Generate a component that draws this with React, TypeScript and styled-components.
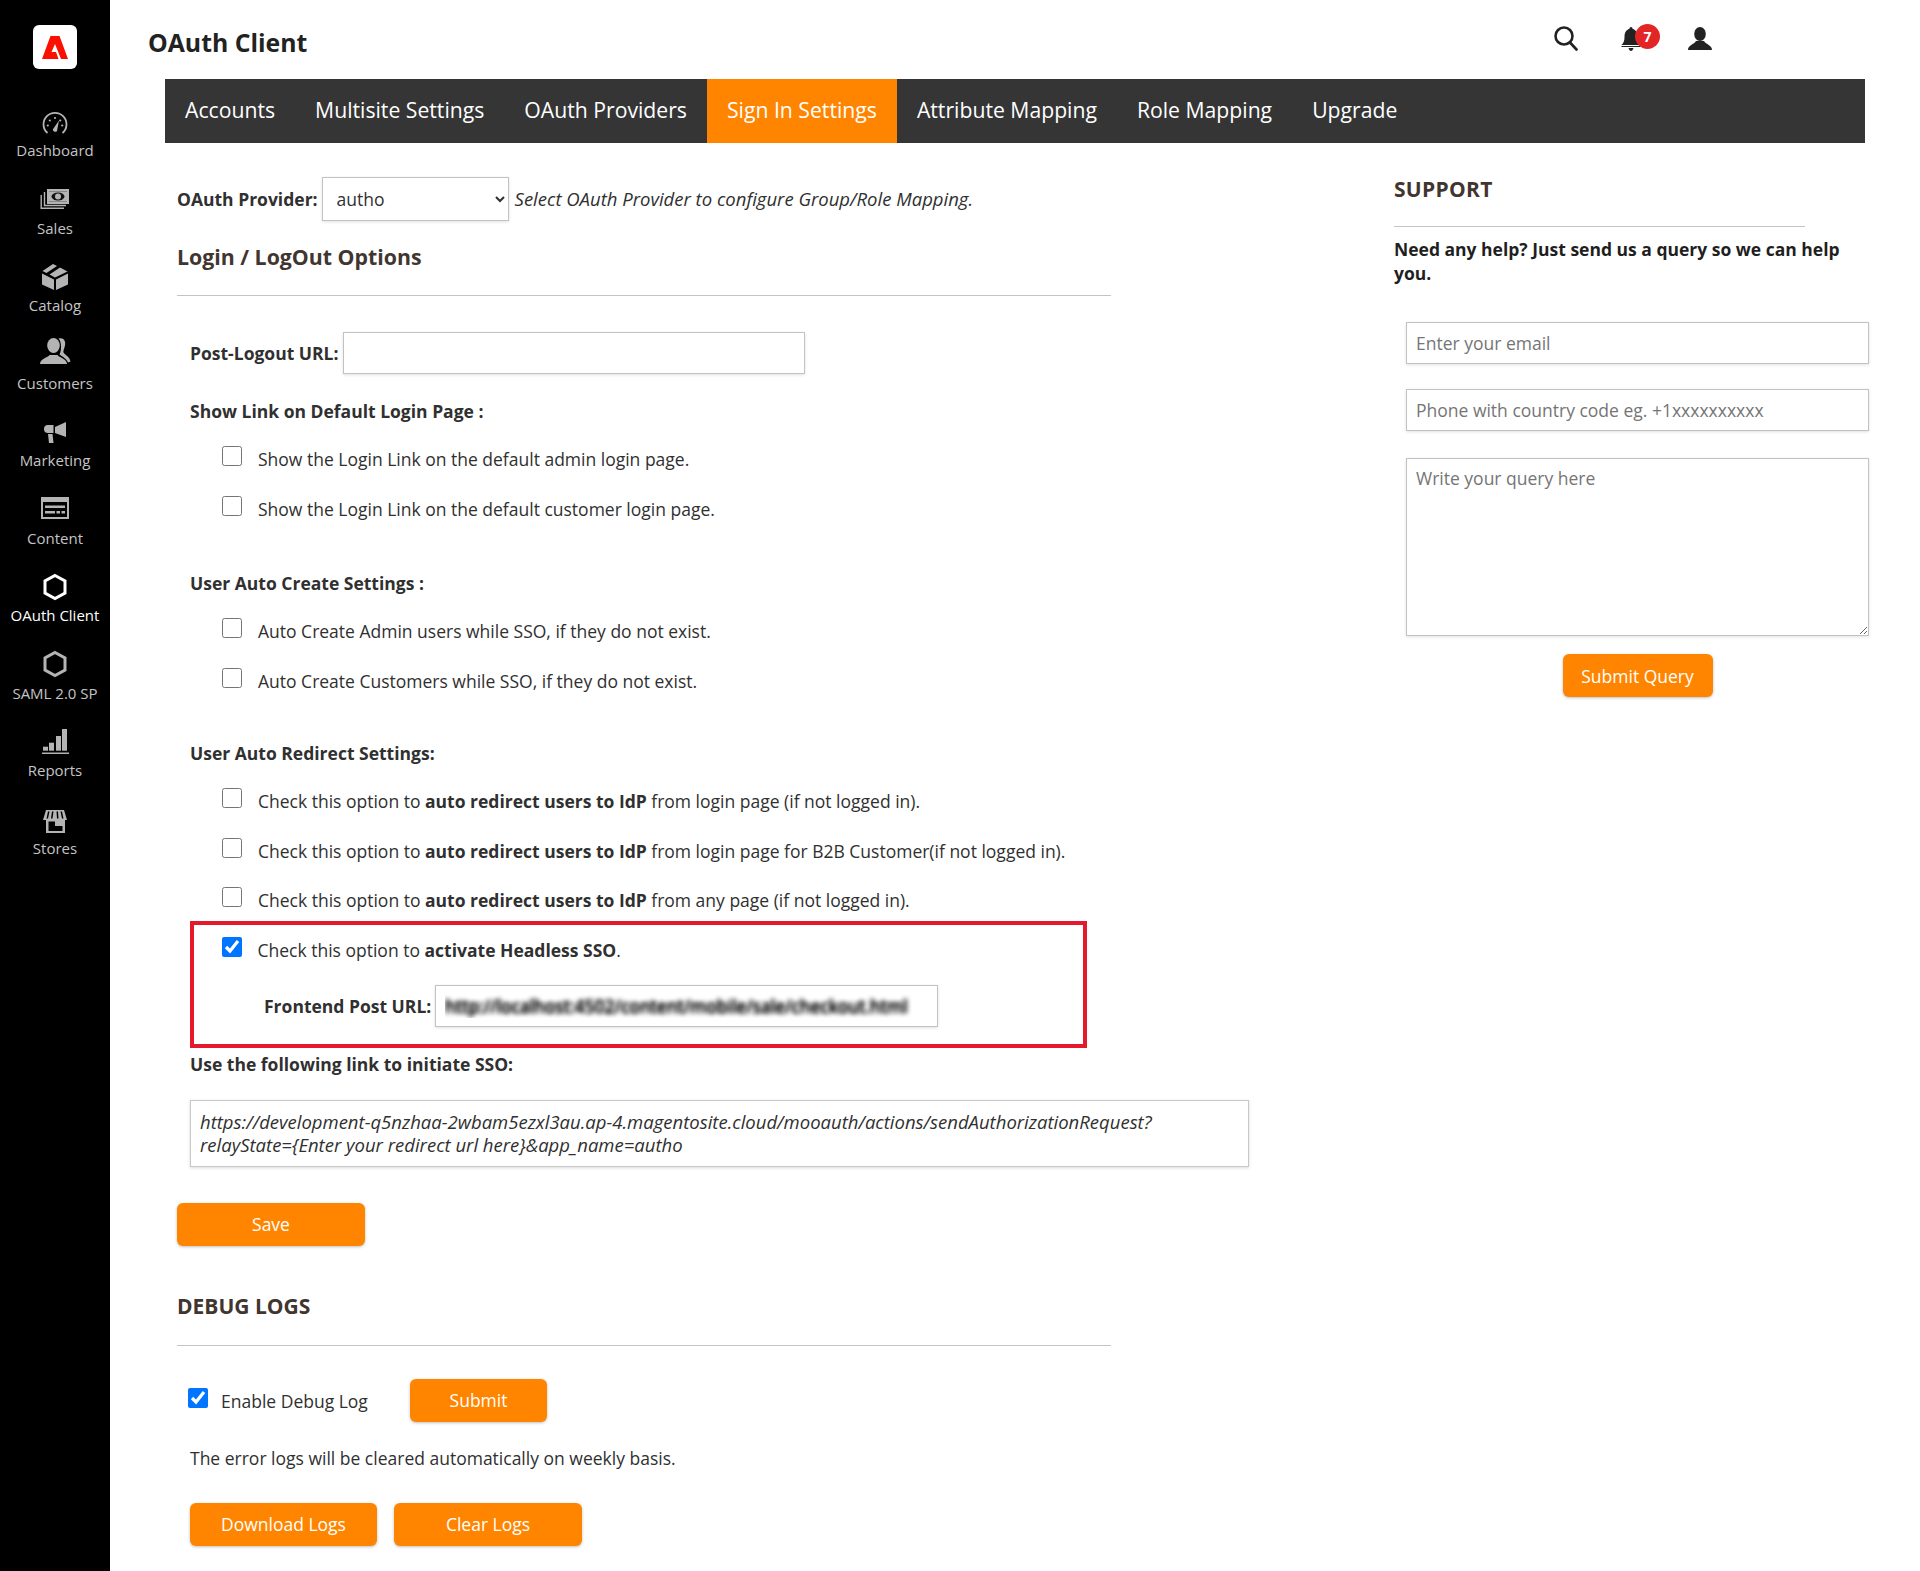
import React from "react";
import styled, { createGlobalStyle } from "styled-components";

const Global = createGlobalStyle`
  html, body { margin: 0; padding: 0; background: #fff; }
  body { font-family: "Open Sans", "Noto Sans", sans-serif; color: #303030; font-size: 17.5px; }
  * { box-sizing: border-box; }
`;

const Shell = styled.div`
  display: flex;
  width: 1920px;
  min-height: 1571px;
`;

const Sidebar = styled.nav`
  flex: 0 0 110px;
  background: #000;
  padding-top: 25px;
  display: flex;
  flex-direction: column;
  align-items: center;
`;

const LogoBox = styled.div`
  width: 44px;
  height: 44px;
  background: #fff;
  border-radius: 6px;
  display: flex;
  align-items: center;
  justify-content: center;
  margin-bottom: 37px;
`;

const NavItem = styled.div<{ $active?: boolean }>`
  height: 77.5px;
  width: 110px;
  display: flex;
  flex-direction: column;
  align-items: center;
  color: ${(p) => (p.$active ? "#fff" : "#c4c4c4")};
  font-size: 15px;
  line-height: 20px;
  svg { display: block; overflow: visible; }
`;

const NavLabel = styled.span`
  margin-top: 2px;
  white-space: nowrap;
`;

const Main = styled.main`
  flex: 1;
  min-width: 0;
`;

const Header = styled.header`
  height: 79px;
  display: flex;
  align-items: center;
  padding: 0 208px 2px 38px;
`;

const Title = styled.h1`
  margin: 6px auto 0 0;
  font-size: 24.8px;
  line-height: 36px;
  font-weight: 700;
  color: #222;
`;

const HeaderIcon = styled.span<{ $gap: number }>`
  position: relative;
  display: block;
  margin-left: ${(p) => p.$gap}px;
  svg { display: block; }
`;

const Badge = styled.span`
  position: absolute;
  left: 14px;
  top: -3px;
  width: 25px;
  height: 25px;
  border-radius: 50%;
  background: #e22626;
  color: #fff;
  font-size: 14px;
  font-weight: 700;
  line-height: 25px;
  text-align: center;
`;

const Tabs = styled.div`
  margin-left: 55px;
  width: 1700px;
  height: 64px;
  background: #353535;
  display: flex;
`;

const Tab = styled.div<{ $active?: boolean }>`
  padding: 0 20px;
  height: 64px;
  line-height: 62px;
  font-size: 21.2px;
  color: #fff;
  white-space: nowrap;
  background: ${(p) => (p.$active ? "#ff8500" : "transparent")};
`;

const Body = styled.div`
  display: flex;
`;

const LeftCol = styled.section`
  flex: 0 0 1284px;
  padding: 34px 0 0 67px;
`;

const RightCol = styled.aside`
  flex: 0 0 526px;
  padding-top: 31px;
`;

const ProviderRow = styled.div`
  display: flex;
  align-items: center;
  height: 44px;
`;

const BoldLabel = styled.label`
  font-weight: 700;
  font-size: 17.5px;
  color: #303030;
  white-space: nowrap;
`;

const Select = styled.select`
  margin-left: 4px;
  width: 187px;
  height: 44px;
  padding: 0 10px;
  font: 17.5px "Open Sans", sans-serif;
  color: #303030;
  background: #fff;
  border: 1px solid #c2c2c2;
  box-shadow: 0 1px 3px rgba(0, 0, 0, 0.12);
`;

const Hint = styled.em`
  margin: 0 0 2px 6px;
  font-size: 18.5px;
  color: #303030;
`;

const SectionTitle = styled.h2<{ $top: number; $size: number }>`
  margin: ${(p) => p.$top}px 0 0;
  font-size: ${(p) => p.$size}px;
  line-height: 30px;
  font-weight: 700;
  color: #41362f;
`;

const Rule = styled.hr<{ $top: number }>`
  margin: ${(p) => p.$top}px 0 0;
  width: 934px;
  height: 1px;
  border: 0;
  background: #c4c4c4;
`;

const Indented = styled.div`
  padding-left: 13px;
`;

const UrlRow = styled.div<{ $top: number; $pad?: number }>`
  display: flex;
  align-items: center;
  margin-top: ${(p) => p.$top}px;
  padding-left: ${(p) => p.$pad ?? 0}px;
`;

const TextInput = styled.input<{ $w: number }>`
  margin-left: 4px;
  width: ${(p) => p.$w}px;
  height: 42px;
  padding: 0 9px;
  font: 17.5px "Open Sans", sans-serif;
  background: #fff;
  border: 1px solid #c2c2c2;
  box-shadow: 0 1px 3px rgba(0, 0, 0, 0.12);
  outline: none;
`;

const BlurredInput = styled(TextInput)`
  color: transparent;
  text-shadow: 0 0 5px #000, 0 0 5px #000;
`;

const SubHeading = styled.h3<{ $top: number }>`
  margin: ${(p) => p.$top}px 0 11px;
  height: 24px;
  font-size: 17.5px;
  line-height: 24px;
  font-weight: 700;
  color: #303030;
`;

const CheckRow = styled.label<{ $pad?: number }>`
  display: flex;
  align-items: center;
  height: 49.5px;
  padding-top: 1px;
  padding-left: ${(p) => p.$pad ?? 32}px;
  font-size: 17.5px;
  color: #303030;
  white-space: nowrap;
  b { font-weight: 700; }
`;

const Check = styled.input.attrs({ type: "checkbox" })`
  width: 20px;
  height: 20px;
  margin: 0 16px 6px 0;
  flex: none;
`;

const Highlight = styled.div`
  margin: -4px 0 0;
  width: 897px;
  height: 127px;
  border: 4.5px solid #e4192b;
`;

const LinkBox = styled.div`
  margin-top: 24px;
  width: 1059px;
  height: 67px;
  padding: 9px 9px;
  font-size: 18.5px;
  line-height: 23.5px;
  font-style: italic;
  color: #303030;
  border: 1px solid #c8c8c8;
  box-shadow: 0 1px 3px rgba(0, 0, 0, 0.15);
`;

const OrangeButton = styled.button<{ $w: number }>`
  width: ${(p) => p.$w}px;
  height: 43px;
  padding: 0;
  border: 0;
  border-radius: 6px;
  background: #ff8500;
  color: #fff;
  font: 17.5px "Open Sans", sans-serif;
  box-shadow: 0 1px 3px rgba(0, 0, 0, 0.25);
`;

const SaveWrap = styled.div`
  margin-top: 36px;
`;

const DebugRow = styled.div`
  display: flex;
  align-items: center;
  margin-top: 33px;
  padding-left: 11px;
  height: 43px;
`;

const DebugCheck = styled(CheckRow)`
  padding-left: 0;
  width: 222px;
  height: 43px;
  flex: none;
`;

const DebugCheckBox = styled(Check)`
  margin-right: 13px;
`;

const Note = styled.p`
  margin: 24px 0 0 13px;
  font-size: 17.5px;
  line-height: 24px;
  color: #303030;
`;

const ButtonRow = styled.div`
  display: flex;
  gap: 17px;
  margin: 33px 0 0 13px;
`;

const SupportTitle = styled.h2`
  margin: 0;
  font-size: 21px;
  line-height: 30px;
  font-weight: 700;
  letter-spacing: 0.3px;
  color: #41362f;
`;

const SupportRule = styled.hr`
  margin: 22px 0 0;
  width: 411px;
  height: 1px;
  border: 0;
  background: #c4c4c4;
`;

const SupportText = styled.p`
  margin: 10px 0 0;
  width: 476px;
  font-size: 17.5px;
  line-height: 24px;
  font-weight: 700;
  color: #1f1f1f;
`;

const SupportForm = styled.form`
  margin: 37px 0 0 12px;
  width: 463px;
  display: flex;
  flex-direction: column;
  align-items: center;
  gap: 25px;
`;

const SupportInput = styled.input`
  width: 100%;
  height: 42px;
  padding: 0 9px;
  font: 17.5px "Open Sans", sans-serif;
  border: 1px solid #c2c2c2;
  box-shadow: 0 1px 3px rgba(0, 0, 0, 0.12);
  outline: none;
  &::placeholder { color: #757575; opacity: 1; }
`;

const SupportArea = styled.textarea`
  width: 100%;
  height: 178px;
  margin-top: 2px;
  padding: 7px 9px;
  font: 17.5px/24px "Open Sans", sans-serif;
  border: 1px solid #c2c2c2;
  box-shadow: 0 1px 3px rgba(0, 0, 0, 0.12);
  outline: none;
  display: block;
  &::placeholder { color: #757575; opacity: 1; }
`;

const SubmitQuery = styled(OrangeButton)`
  margin-top: -7px;
`;

const g = "#b4b4b4";

const AdobeLogo = () => (
  <svg width="26" height="23" viewBox="0 0 26 23">
    <path fill="#fa0f00" d="M8.5 0h9L26 23h-7L13 8 9.5 16H14l2.5 7H0z" />
  </svg>
);

const icons: Record<string, React.ReactNode> = {
  Dashboard: (
    <svg width="32" height="32" viewBox="0 0 32 32" fill={g}>
      <path fill="none" stroke={g} strokeWidth="1.8" d="M8.5 27A11.5 11.5 0 1 1 23.5 27" />
      <circle cx="16" cy="12" r="1.1" /><circle cx="10.8" cy="14.5" r="1.1" /><circle cx="21.2" cy="14.5" r="1.1" />
      <circle cx="8.8" cy="19.5" r="1.1" /><circle cx="23.2" cy="19.5" r="1.1" />
      <path d="M13.8 23.5 20 14.5 18 25a2.4 2.4 0 0 1-4.2-1.5z" />
    </svg>
  ),
  Sales: (
    <svg width="32" height="32" viewBox="0 0 32 32" fill={g}>
      <path d="M8 5h22v15H8zM10 7.5v10h18v-10z" fillRule="evenodd" />
      <rect x="10" y="7.5" width="18" height="10" />
      <ellipse cx="19" cy="12.5" rx="6.5" ry="4" fill="#111" />
      <ellipse cx="19" cy="12.5" rx="3" ry="3" fill={g} />
      <path fill="none" stroke={g} strokeWidth="1.4" d="M5.5 8v13.5H27M2.2 11v13.3H25" />
    </svg>
  ),
  Catalog: (
    <svg width="32" height="32" viewBox="0 0 32 32" fill={g}>
      <path d="M3 12.5 15 18.5V29L3 23.5zM29 12.5 17 18.5V29l12-5.5zM3.5 10 14 3l4 2L7.5 12zM10.5 13.5 21 6.5l7.5 4L16 16.5z" />
    </svg>
  ),
  Customers: (
    <svg width="32" height="32" viewBox="0 0 32 32" fill={g}>
      <ellipse cx="14.5" cy="6.5" rx="6.3" ry="7.5" />
      <path d="M1 25c0-5.5 8-6.5 9.5-9h8c1.5 2.5 9.5 3.5 9.5 9z" />
      <path d="M19.5 -.5c5-1.5 7.5 2.5 6.5 7-.7 3-2 5.5-1.5 7 1.5 2.5 6 4 7 9l-2.5 1c-1.5-4-6-6-8.5-8 2-3.5 2.5-12.5-1-16z" />
    </svg>
  ),
  Marketing: (
    <svg width="32" height="32" viewBox="0 0 32 32" fill={g}>
      <path d="M16 11 27 6v15l-11-4z" />
      <path d="M9 9h5.5v8H9a4 4 0 0 1 0-8z" />
      <path d="M9 18h4.5l1 9H10z" />
    </svg>
  ),
  Content: (
    <svg width="32" height="32" viewBox="0 0 32 32" fill={g}>
      <path fillRule="evenodd" d="M2 3h28v22H2zM4 8v15h24V8z" />
      <rect x="6" y="11.5" width="20" height="2.5" />
      <rect x="6" y="17" width="10" height="2.5" /><rect x="17.5" y="17" width="3.5" height="2.5" /><rect x="22.5" y="17" width="3.5" height="2.5" />
    </svg>
  ),
  "OAuth Client": (
    <svg width="32" height="32" viewBox="0 0 32 32" fill="none" stroke="#fff" strokeWidth="3">
      <path d="M16 4.5 26 10v12l-10 5.5L6 22V10z" />
    </svg>
  ),
  "SAML 2.0 SP": (
    <svg width="32" height="32" viewBox="0 0 32 32" fill="none" stroke={g} strokeWidth="3">
      <path d="M16 3.5 26 9v12l-10 5.5L6 21V9z" />
    </svg>
  ),
  Reports: (
    <svg width="32" height="32" viewBox="0 0 32 32" fill={g}>
      <rect x="4" y="20.7" width="5" height="4" /><rect x="10" y="16.7" width="5" height="8" />
      <rect x="17" y="10" width="5" height="14.7" /><rect x="23" y="3" width="5" height="21.7" />
      <rect x="3" y="26.5" width="27" height="1.5" />
    </svg>
  ),
  Stores: (
    <svg width="32" height="32" viewBox="0 0 32 32" fill={g}>
      <path fillRule="evenodd" d="M7 6h18l3 10H4zM9 7.5 7.5 14.5h1.5L10.5 7.5zM13 7.5 12 14.5h1.5L14.5 7.5zM17.5 7.5 18 14.5h1.5L19 7.5zM21.5 7.5 23 14.5h1.5L23 7.5z" />
      <path fillRule="evenodd" d="M7 16h19v13H7zM9.5 17.5v9.5h14v-5h-7.5v-4.5z" />
    </svg>
  ),
};

const navItems = ["Dashboard", "Sales", "Catalog", "Customers", "Marketing", "Content", "OAuth Client", "SAML 2.0 SP", "Reports", "Stores"];
const tabs = ["Accounts", "Multisite Settings", "OAuth Providers", "Sign In Settings", "Attribute Mapping", "Role Mapping", "Upgrade"];

export default function App() {
  return (
    <Shell>
      <Global />
      <Sidebar>
        <LogoBox><AdobeLogo /></LogoBox>
        {navItems.map((n) => (
          <NavItem key={n} $active={n === "OAuth Client"}>
            {icons[n]}
            <NavLabel>{n}</NavLabel>
          </NavItem>
        ))}
      </Sidebar>
      <Main>
        <Header>
          <Title>OAuth Client</Title>
          <HeaderIcon $gap={0}>
            <svg width="24" height="25" viewBox="0 0 24 25" fill="none" stroke="#222" strokeWidth="2.6">
              <circle cx="10" cy="10" r="8.5" /><path d="M16 16.5 22.5 23.5" strokeLinecap="round" />
            </svg>
          </HeaderIcon>
          <HeaderIcon $gap={43}>
            <svg width="20" height="24" viewBox="0 0 20 24" fill="#222">
              <path d="M10 0c1 0 1.5.7 1.5 1.8C15 2.8 16.5 6 16.5 10c0 4 1 6 3 8H.5c2-2 3-4 3-8 0-4 1.5-7.2 5-8.2C8.5.7 9 0 10 0z" />
              <path d="M.5 19h19v1H.5zM7.5 21h5c-.5 2-1.5 3-2.5 3s-2-1-2.5-3z" />
            </svg>
            <Badge>7</Badge>
          </HeaderIcon>
          <HeaderIcon $gap={47}>
            <svg width="24" height="23" viewBox="0 0 24 23" fill="#222">
              <ellipse cx="12" cy="7" rx="5.8" ry="7" />
              <path d="M0 23c0-5 6-5.5 8-9h8c2 3.5 8 4 8 9z" />
            </svg>
          </HeaderIcon>
        </Header>
        <Tabs>
          {tabs.map((t) => <Tab key={t} $active={t === "Sign In Settings"}>{t}</Tab>)}
        </Tabs>
        <Body>
          <LeftCol>
            <ProviderRow>
              <BoldLabel>OAuth Provider:</BoldLabel>
              <Select defaultValue="autho"><option>autho</option></Select>
              <Hint>Select OAuth Provider to configure Group/Role Mapping.</Hint>
            </ProviderRow>
            <SectionTitle $top={21} $size={21.3}>Login / LogOut Options</SectionTitle>
            <Rule $top={23} />
            <Indented>
              <UrlRow $top={36}>
                <BoldLabel>Post-Logout URL:</BoldLabel>
                <TextInput $w={462} />
              </UrlRow>
              <SubHeading $top={25}>Show Link on Default Login Page :</SubHeading>
              <CheckRow><Check />Show the Login Link on the default admin login page.</CheckRow>
              <CheckRow><Check />Show the Login Link on the default customer login page.</CheckRow>
              <SubHeading $top={38}>User Auto Create Settings :</SubHeading>
              <CheckRow><Check />Auto Create Admin users while SSO, if they do not exist.</CheckRow>
              <CheckRow><Check />Auto Create Customers while SSO, if they do not exist.</CheckRow>
              <SubHeading $top={36}>User Auto Redirect Settings:</SubHeading>
              <CheckRow><Check />Check this option to&nbsp;<b>auto redirect users to IdP</b>&nbsp;from login page (if not logged in).</CheckRow>
              <CheckRow><Check />Check this option to&nbsp;<b>auto redirect users to IdP</b>&nbsp;from login page for B2B Customer(if not logged in).</CheckRow>
              <CheckRow><Check />Check this option to&nbsp;<b>auto redirect users to IdP</b>&nbsp;from any page (if not logged in).</CheckRow>
              <Highlight>
                <CheckRow $pad={27.5}><Check defaultChecked />Check this option to&nbsp;<b>activate Headless SSO</b>.</CheckRow>
                <UrlRow $top={11} $pad={70}>
                  <BoldLabel>Frontend Post URL:</BoldLabel>
                  <BlurredInput $w={503} readOnly defaultValue="http://localhost:4502/content/mobile/sale/checkout.html" />
                </UrlRow>
              </Highlight>
              <SubHeading $top={4}>Use the following link to initiate SSO:</SubHeading>
              <LinkBox>
                https://development-q5nzhaa-2wbam5ezxl3au.ap-4.magentosite.cloud/mooauth/actions/sendAuthorizationRequest?<br />
                relayState={"{Enter your redirect url here}"}&amp;app_name=autho
              </LinkBox>
            </Indented>
            <SaveWrap><OrangeButton $w={188}>Save</OrangeButton></SaveWrap>
            <SectionTitle $top={45} $size={21}>DEBUG LOGS</SectionTitle>
            <Rule $top={24} />
            <DebugRow>
              <DebugCheck><DebugCheckBox defaultChecked />Enable Debug Log</DebugCheck>
              <OrangeButton $w={137}>Submit</OrangeButton>
            </DebugRow>
            <Note>The error logs will be cleared automatically on weekly basis.</Note>
            <ButtonRow>
              <OrangeButton $w={187}>Download Logs</OrangeButton>
              <OrangeButton $w={188}>Clear Logs</OrangeButton>
            </ButtonRow>
          </LeftCol>
          <RightCol>
            <SupportTitle>SUPPORT</SupportTitle>
            <SupportRule />
            <SupportText>Need any help? Just send us a query so we can help you.</SupportText>
            <SupportForm>
              <SupportInput placeholder="Enter your email" />
              <SupportInput placeholder="Phone with country code eg. +1xxxxxxxxxx" />
              <SupportArea placeholder="Write your query here" />
              <SubmitQuery type="button" $w={150}>Submit Query</SubmitQuery>
            </SupportForm>
          </RightCol>
        </Body>
      </Main>
    </Shell>
  );
}
